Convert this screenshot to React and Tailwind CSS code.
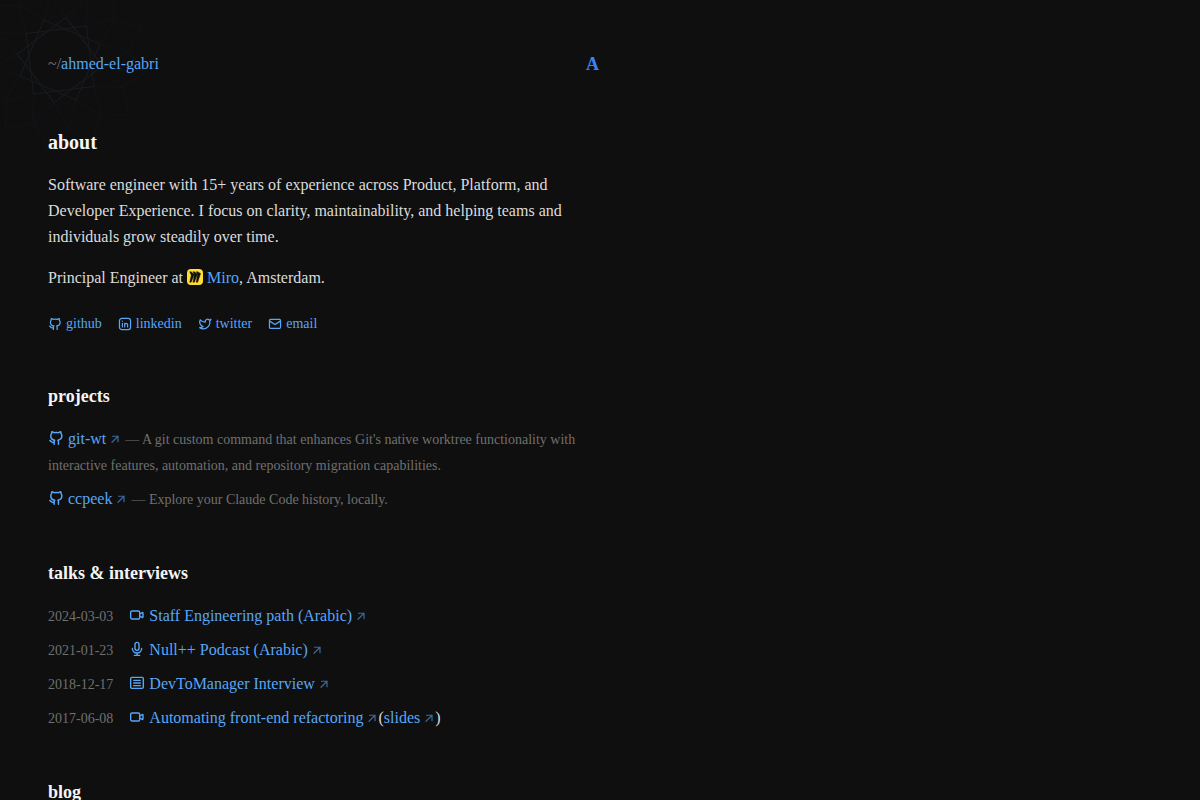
import React from 'react';
import { Twitter } from 'lucide-react';

const socials = [
  { label: 'github', href: '#github' },
  { label: 'linkedin', href: '#linkedin' },
  { label: 'twitter', href: '#twitter' },
  { label: 'email', href: '#email' },
];

const projects = [
  {
    name: 'git-wt',
    description:
      "A git custom command that enhances Git's native worktree functionality with interactive features, automation, and repository migration capabilities.",
  },
  { name: 'ccpeek', description: 'Explore your Claude Code history, locally.' },
];

const talks = [
  { date: '2024-03-03', icon: 'video', title: 'Staff Engineering path (Arabic)' },
  { date: '2021-01-23', icon: 'mic', title: 'Null++ Podcast (Arabic)' },
  { date: '2018-12-17', icon: 'article', title: 'DevToManager Interview' },
  { date: '2017-06-08', icon: 'video', title: 'Automating front-end refactoring', slides: true },
];

const Svg = ({ className, viewBox = '0 0 24 24', strokeWidth = 2.1, children }) => (
  <svg
    viewBox={viewBox}
    fill="none"
    stroke="currentColor"
    strokeWidth={strokeWidth}
    strokeLinecap="round"
    strokeLinejoin="round"
    aria-hidden="true"
    className={className}
  >
    {children}
  </svg>
);

const Icon = ({ name, className }) => {
  switch (name) {
    case 'github':
      return (
        <Svg className={className} viewBox="-1 -1 26 26" strokeWidth={2.4}>
          <path d="M9 19c-5 1.5-5-2.5-7-3m14 6v-3.87a3.37 3.37 0 0 0-.94-2.61c3.14-.35 6.44-1.54 6.44-7A5.44 5.44 0 0 0 20 4.77 5.07 5.07 0 0 0 19.91 2S18.73 1.65 16 3.48a13.38 13.38 0 0 0-7 0C6.27 1.65 5.09 2 5.09 2A5.07 5.07 0 0 0 5 4.77a5.44 5.44 0 0 0-1.5 3.78c0 5.42 3.3 6.61 6.44 7A3.37 3.37 0 0 0 9 18.13V22" />
        </Svg>
      );
    case 'twitter':
      return <Twitter viewBox="-1 0 25 25" strokeWidth={2.3} className={className} />;
    case 'mic':
      return (
        <Svg className={className}>
          <rect x="9" y="2" width="6" height="12" rx="3" />
          <path d="M5 11a7 7 0 0 0 14 0M12 18v3.5M8 21.5h8" />
        </Svg>
      );
    case 'email':
      return (
        <Svg className={className}>
          <rect x="2.5" y="4" width="19" height="15.5" rx="2" />
          <path d="m3.5 7.5 8.5 5.5 8.5-5.5" />
        </Svg>
      );
    case 'linkedin':
      return (
        <Svg className={className}>
          <rect x="2.5" y="2.5" width="19" height="19" rx="4" />
          <path d="M7.5 11v6M7.5 7.2v.1M11.5 17v-6M11.5 13.5c0-3.2 5-3.4 5 0V17" />
        </Svg>
      );
    case 'video':
      return (
        <Svg className={className}>
          <rect x="2.5" y="6" width="13.5" height="12" rx="2" />
          <path d="m16 10.5 3.8-2.2a.8.8 0 0 1 1.2.7v6a.8.8 0 0 1-1.2.7L16 13.5" />
        </Svg>
      );
    case 'article':
      return (
        <Svg className={className}>
          <rect x="2.5" y="3.5" width="19" height="16.5" rx="2" />
          <path d="M7 8h10M7 12h10M7 16h10" />
        </Svg>
      );
    default:
      return null;
  }
};

const ExternalArrow = () => (
  <Svg className="ml-[3px] inline size-3 align-[-1px] opacity-60" strokeWidth={2.4}>
    <path d="M6 18.5 18 6.5M7 6.5h11v11" />
  </Svg>
);

const MiroLogo = () => (
  <svg viewBox="0 0 24 24" aria-hidden="true" className="mr-1 inline size-4 align-[-2px]">
    <rect width="24" height="24" rx="6" fill="#ffdd33" />
    <path
      d="M16.1 4h-2.4l2 3.6L11.2 4H8.8L11 8.4 6.3 4H4l2.3 5.4L4 20h2.3L11 8.4 8.8 20h2.4l4.5-12.4L13.7 20h2.4L20.5 6.7z"
      fill="#111111"
      stroke="#111111"
      strokeWidth="0.5"
    />
  </svg>
);

const Rosette = () => {
  const squares = [0, 30, 60];
  const petals = [0, 30, 60, 90, 120, 150, 180, 210, 240, 270, 300, 330];
  return (
    <svg
      viewBox="-100 -100 200 200"
      fill="none"
      aria-hidden="true"
      className="pointer-events-none absolute -top-10 -left-10 size-50"
    >
      {petals.map((angle) => (
        <path
          key={angle}
          d="M0-43 17-66 0-88-17-66Z"
          transform={`rotate(${angle + 8})`}
          stroke="#121820"
          strokeOpacity="0.6"
        />
      ))}
      {squares.map((angle) => (
        <path key={angle} d="M0-43 43 0 0 43-43 0Z" transform={`rotate(${angle + 8})`} stroke="#181b20" />
      ))}
      <circle r="31" stroke="#15181c" />
    </svg>
  );
};

const linkClass = 'text-[#58a6f6] hover:underline';

const SectionTitle = ({ children }) => (
  <h2 className="mb-[17px] text-lg leading-[26px] font-bold text-[#f5f5f5]">{children}</h2>
);

const App = () => {
  return (
    <div className="relative h-screen overflow-x-hidden overflow-y-auto bg-[#0f0f0f] font-['Liberation_Serif',serif] text-base leading-[26px] text-[#dcdcdc] [scrollbar-width:none]">
      <Rosette />
      <div className="relative max-w-[647px] px-12 py-12">
        <header className="mb-12 flex h-8 items-center justify-between">
          <nav className="text-[#707070]">
            ~/<a href="#home" className={linkClass}>ahmed-el-gabri</a>
          </nav>
          <a href="#top" className="text-lg font-bold text-[#3b82f6]">A</a>
        </header>

        <main className="flex flex-col gap-12">
          <section>
            <h1 className="mb-4 text-xl leading-7 font-bold text-[#f5f5f5]">about</h1>
            <p className="mb-[15px]">
              Software engineer with 15+ years of experience across Product, Platform, and Developer
              Experience. I focus on clarity, maintainability, and helping teams and individuals grow
              steadily over time.
            </p>
            <p>
              Principal Engineer at <MiroLogo />
              <a href="#miro" className={linkClass}>Miro</a>, Amsterdam.
            </p>
            <ul className="mt-[22px] flex flex-wrap gap-4 text-sm leading-[22px]">
              {socials.map((item) => (
                <li key={item.label}>
                  <a href={item.href} className="flex items-center gap-1 text-[#58a6f6] hover:underline">
                    <Icon name={item.label} className="size-3.5" />
                    {item.label}
                  </a>
                </li>
              ))}
            </ul>
          </section>

          <section>
            <SectionTitle>projects</SectionTitle>
            <ul className="flex flex-col gap-2">
              {projects.map((project) => (
                <li key={project.name}>
                  <a href={`#${project.name}`} className={linkClass}>
                    <Icon name="github" className="mr-1 inline size-4 align-[-2px]" />
                    {project.name}
                    <ExternalArrow />
                  </a>{' '}
                  <span className="text-sm text-[#707070]">— {project.description}</span>
                </li>
              ))}
            </ul>
          </section>

          <section>
            <SectionTitle>talks &amp; interviews</SectionTitle>
            <ul className="flex flex-col gap-2">
              {talks.map((talk) => (
                <li key={talk.date} className="flex items-baseline gap-4">
                  <time className="shrink-0 text-sm text-[#707070]">{talk.date}</time>
                  <span>
                    <a href={`#${talk.date}`} className={linkClass}>
                      <Icon name={talk.icon} className="mr-1 inline size-4 align-[-2px]" />
                      {talk.title}
                      <ExternalArrow />
                    </a>
                    {talk.slides && (
                      <>
                        (<a href="#slides" className={linkClass}>slides<ExternalArrow /></a>)
                      </>
                    )}
                  </span>
                </li>
              ))}
            </ul>
          </section>

          <section>
            <SectionTitle>blog</SectionTitle>
          </section>
        </main>
      </div>
    </div>
  );
};

export default App;
